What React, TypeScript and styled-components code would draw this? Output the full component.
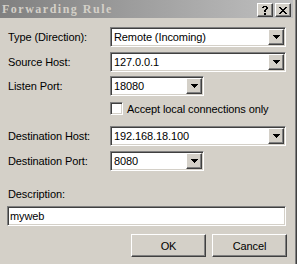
import React from "react";
import styled, { createGlobalStyle } from "styled-components";

const Global = createGlobalStyle`
  html, body { margin: 0; padding: 0; background: #d4d0c8; }
  #root { width: 297px; height: 264px; }
`;

const sunken = `
  border: 1px solid;
  border-color: #808080 #ffffff #ffffff #808080;
  box-shadow: inset 1px 1px #404040, inset -1px -1px #d4d0c8;
  padding: 1px;
  box-sizing: border-box;
`;

const raised = `
  border: 1px solid;
  border-color: #ffffff #404040 #404040 #ffffff;
  box-shadow: inset -1px -1px #808080, inset 1px 1px #d4d0c8;
  box-sizing: border-box;
  background: #d4d0c8;
`;

const Dialog = styled.div`
  width: 297px;
  height: 264px;
  box-sizing: border-box;
  padding-right: 4px;
  display: flex;
  flex-direction: column;
  background: #d4d0c8;
  box-shadow: inset -1px 0 #404040, inset -2px 0 #808080;
  font-family: "Liberation Sans", Arial, sans-serif;
  font-size: 11px;
  letter-spacing: -0.1px;
  color: #000;
  overflow: hidden;
`;

const TitleBar = styled.div`
  height: 18px;
  flex: none;
  display: flex;
  align-items: flex-start;
  padding: 0 2px;
  background: linear-gradient(to right, #808080, #c0c0c0);
`;

const TitleText = styled.div`
  flex: 1;
  font-family: "Liberation Serif", "Times New Roman", serif;
  font-weight: bold;
  font-size: 12px;
  line-height: 18px;
  letter-spacing: 1.5px;
  color: #d4d0c8;
  white-space: nowrap;
`;

const CaptionButtons = styled.div`
  display: flex;
  gap: 2px;
  margin-top: 3px;
`;

const CaptionButton = styled.div`
  ${raised}
  width: 16px;
  height: 14px;
  display: flex;
  align-items: center;
  justify-content: center;
`;

const Body = styled.div`
  display: flex;
  flex-direction: column;
  padding: 9px 6px 0 7px;
`;

const Row = styled.div<{ $mt: number }>`
  display: flex;
  align-items: center;
  height: 20px;
  margin-top: ${(p) => p.$mt}px;
`;

const Label = styled.div`
  width: 103px;
  padding-left: 1px;
  box-sizing: border-box;
  white-space: nowrap;
`;

const Combo = styled.div<{ $w: number }>`
  ${sunken}
  width: ${(p) => p.$w}px;
  height: 20px;
  background: #fff;
  display: flex;
  align-items: center;
`;

const FieldText = styled.div`
  flex: 1;
  padding-left: 2px;
  white-space: nowrap;
  overflow: hidden;
`;

const DropButton = styled.div`
  ${raised}
  width: 16px;
  height: 16px;
  flex: none;
  display: flex;
  align-items: center;
  justify-content: center;
`;

const CheckRow = styled.div`
  display: flex;
  align-items: center;
  height: 13px;
  margin-top: 6px;
  padding-left: 103px;
`;

const CheckBox = styled.div`
  ${sunken}
  width: 13px;
  height: 13px;
  background: #fff;
  flex: none;
`;

const CheckLabel = styled.div`
  margin-left: 4px;
  white-space: nowrap;
`;

const DescLabel = styled.div`
  margin-top: 17px;
  padding-left: 1px;
  line-height: 13px;
`;

const DescInput = styled.div`
  ${sunken}
  width: 279px;
  height: 20px;
  margin-top: 5px;
  background: #fff;
  display: flex;
  align-items: center;
`;

const DescText = styled.div`
  padding-left: 1px;
  white-space: nowrap;
`;

const ButtonRow = styled.div`
  display: flex;
  justify-content: flex-end;
  gap: 6px;
  margin-top: 8px;
`;

const PushButton = styled.div`
  ${raised}
  width: 75px;
  height: 23px;
  display: flex;
  align-items: center;
  justify-content: center;
`;

const Pixels: React.FC<{ rows: string[] }> = ({ rows }) => (
  <svg
    width={rows[0].length}
    height={rows.length}
    shapeRendering="crispEdges"
    style={{ display: "block" }}
  >
    {rows.flatMap((r, y) =>
      r.split("").map((c, x) =>
        c === "#" ? <rect key={`${x}-${y}`} x={x} y={y} width={1} height={1} fill="#000" /> : null
      )
    )}
  </svg>
);

const ARROW = ["#######", ".#####.", "..###..", "...#..."];
const CLOSE = ["##....##", ".##..##.", "..####..", "...##...", "..####..", ".##..##.", "##....##"];
const HELP = [".####.", "##..##", "....##", "...##.", "..##..", "..##..", "......", "..##..", "..##.."];

const ComboBox: React.FC<{ w: number; value: string }> = ({ w, value }) => (
  <Combo $w={w}>
    <FieldText>{value}</FieldText>
    <DropButton>
      <Pixels rows={ARROW} />
    </DropButton>
  </Combo>
);

export default function App() {
  return (
    <>
      <Global />
      <Dialog>
        <TitleBar>
          <TitleText>Forwarding Rule</TitleText>
          <CaptionButtons>
            <CaptionButton>
              <Pixels rows={HELP} />
            </CaptionButton>
            <CaptionButton>
              <Pixels rows={CLOSE} />
            </CaptionButton>
          </CaptionButtons>
        </TitleBar>
        <Body>
          <Row $mt={0}>
            <Label>Type (Direction):</Label>
            <ComboBox w={176} value="Remote (Incoming)" />
          </Row>
          <Row $mt={5}>
            <Label>Source Host:</Label>
            <ComboBox w={176} value="127.0.0.1" />
          </Row>
          <Row $mt={4}>
            <Label>Listen Port:</Label>
            <ComboBox w={94} value="18080" />
          </Row>
          <CheckRow>
            <CheckBox />
            <CheckLabel>Accept local connections only</CheckLabel>
          </CheckRow>
          <Row $mt={11}>
            <Label>Destination Host:</Label>
            <ComboBox w={176} value="192.168.18.100" />
          </Row>
          <Row $mt={5}>
            <Label>Destination Port:</Label>
            <ComboBox w={94} value="8080" />
          </Row>
          <DescLabel>Description:</DescLabel>
          <DescInput>
            <DescText>myweb</DescText>
          </DescInput>
          <ButtonRow>
            <PushButton>OK</PushButton>
            <PushButton>Cancel</PushButton>
          </ButtonRow>
        </Body>
      </Dialog>
    </>
  );
}
